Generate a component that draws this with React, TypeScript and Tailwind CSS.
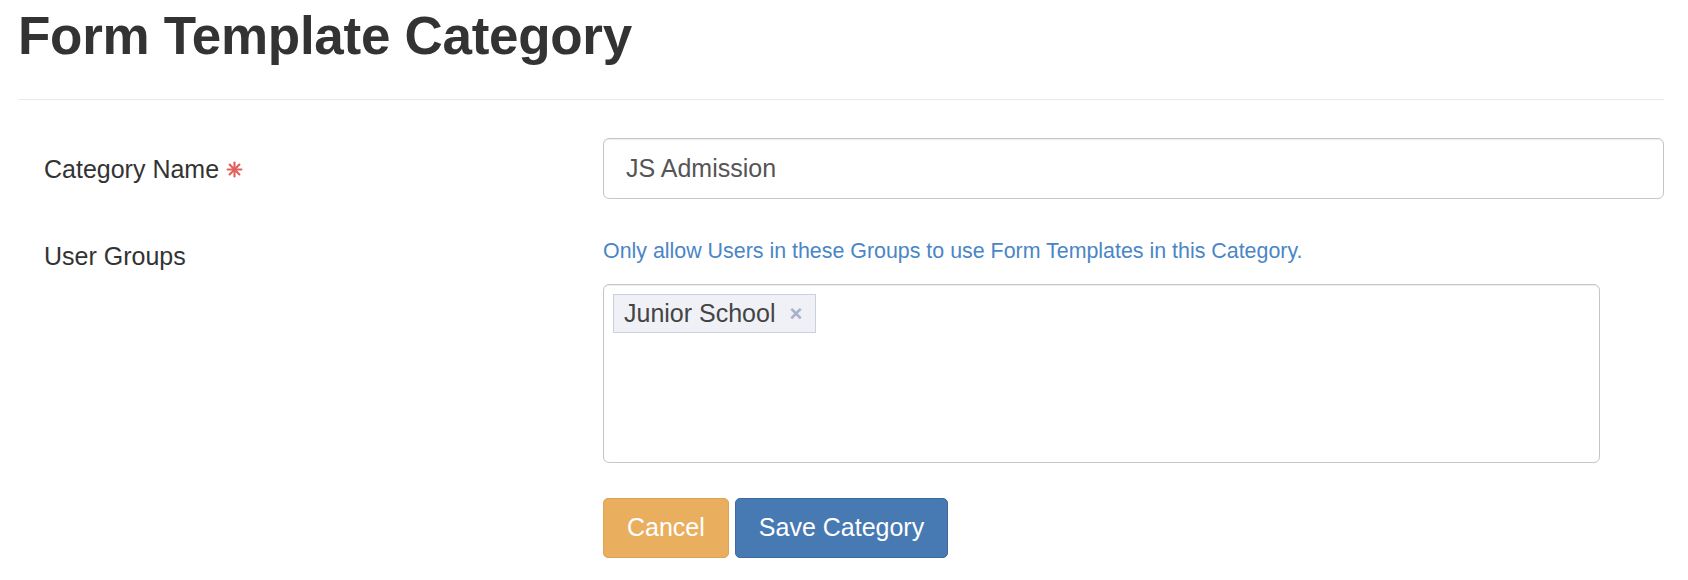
import { useState } from "react";

export default function App() {
  const [name, setName] = useState("JS Admission");
  const [groups, setGroups] = useState<string[]>(["Junior School"]);

  return (
    <div className="min-h-screen bg-white px-[18px] pr-[24px] font-['Liberation_Sans',Arial,sans-serif] text-[#333]">
      {/* Page header */}
      <h1 className="pt-[9px] text-[53px] font-bold leading-none tracking-[-0.3px] text-[#333]">
        Form Template Category
      </h1>
      <hr className="mt-[37px] border-t border-[#eaeaea]" />

      <form className="mt-[38px] pl-[26px]" onSubmit={(e) => e.preventDefault()}>
        {/* Category Name */}
        <div className="grid grid-cols-[559px_1fr] items-center">
          <label className="flex items-center gap-[7px] text-[25px] leading-[30px]">
            Category Name
            <svg width="17" height="17" viewBox="0 0 16 16" className="mt-[1px]">
              <g stroke="#e0605c" strokeWidth="2" strokeLinecap="round">
                <line x1="8" y1="1.5" x2="8" y2="14.5" />
                <line x1="1.5" y1="8" x2="14.5" y2="8" />
                <line x1="3.4" y1="3.4" x2="12.6" y2="12.6" />
                <line x1="12.6" y1="3.4" x2="3.4" y2="12.6" />
              </g>
            </svg>
          </label>
          <input
            type="text"
            value={name}
            onChange={(e) => setName(e.target.value)}
            className="h-[61px] w-full rounded-[6px] border border-[#c6c6c6] px-[22px] text-[25px] text-[#555] shadow-[inset_0_1px_1px_rgba(0,0,0,0.075)] outline-none"
          />
        </div>

        {/* User Groups */}
        <div className="mt-[37px] grid grid-cols-[559px_1fr]">
          <label className="pt-[5px] text-[25px] leading-[30px]">User Groups</label>
          <div>
            <p className="text-[21.4px] leading-[30px] text-[#4a86c6]">
              Only allow Users in these Groups to use Form Templates in this Category.
            </p>
            <div className="mt-[18px] h-[179px] w-[997px] rounded-[6px] border border-[#c6c6c6] p-[9px] shadow-[inset_0_1px_1px_rgba(0,0,0,0.075)]">
              <div className="flex flex-wrap gap-[6px]">
                {groups.map((g) => (
                  <span
                    key={g}
                    className="flex h-[39px] items-center border border-[#c9d1e1] bg-[#eff1f6] pl-[10px] pr-[13px] text-[25px] text-[#444]"
                  >
                    {g}
                    <button
                      type="button"
                      onClick={() => setGroups(groups.filter((x) => x !== g))}
                      className="ml-[14px] text-[22px] font-bold leading-none text-[#a7b1c9]"
                    >
                      ×
                    </button>
                  </span>
                ))}
              </div>
            </div>
          </div>
        </div>

        {/* Actions */}
        <div className="mt-[35px] grid grid-cols-[559px_1fr]">
          <div />
          <div className="flex gap-[6px]">
            <button
              type="button"
              className="h-[60px] rounded-[5px] border border-[#e0a24e] bg-[#e9af5f] px-[23px] text-[25px] text-white"
            >
              Cancel
            </button>
            <button
              type="submit"
              className="h-[60px] rounded-[5px] border border-[#3b69a0] bg-[#4779b3] px-[23px] text-[25px] text-white"
            >
              Save Category
            </button>
          </div>
        </div>
      </form>
    </div>
  );
}
